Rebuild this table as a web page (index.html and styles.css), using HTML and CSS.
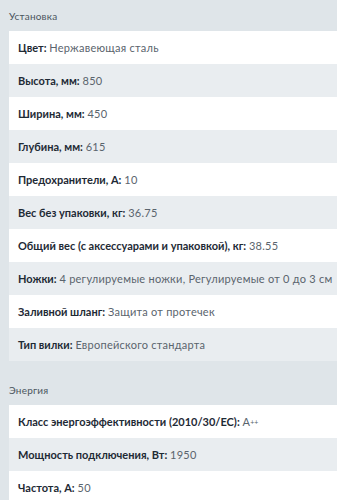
FILE: index.html
```html
<!DOCTYPE html>
<html lang="ru">
<head>
<meta charset="utf-8">
<link rel="stylesheet" href="styles.css">
</head>
<body>
<section class="group">
  <h3 class="group-title">Установка</h3>
  <ul class="specs">
    <li class="spec"><b>Цвет:</b> <span>Нержавеющая сталь</span></li>
    <li class="spec"><b>Высота, мм:</b> <span>850</span></li>
    <li class="spec"><b>Ширина, мм:</b> <span>450</span></li>
    <li class="spec"><b>Глубина, мм:</b> <span>615</span></li>
    <li class="spec"><b>Предохранители, А:</b> <span>10</span></li>
    <li class="spec"><b>Вес без упаковки, кг:</b> <span>36.75</span></li>
    <li class="spec"><b>Общий вес (с аксессуарами и упаковкой), кг:</b> <span>38.55</span></li>
    <li class="spec"><b>Ножки:</b> <span>4 регулируемые ножки, Регулируемые от 0 до 3 см</span></li>
    <li class="spec"><b>Заливной шланг:</b> <span>Защита от протечек</span></li>
    <li class="spec"><b>Тип вилки:</b> <span>Европейского стандарта</span></li>
  </ul>
</section>
<section class="group group-next">
  <h3 class="group-title">Энергия</h3>
  <ul class="specs">
    <li class="spec"><b>Класс энергоэффективности (2010/30/EC):</b> <span>A<small class="plus">++</small></span></li>
    <li class="spec"><b>Мощность подключения, Вт:</b> <span>1950</span></li>
    <li class="spec"><b>Частота, А:</b> <span>50</span></li>
  </ul>
</section>
</body>
</html>
```
FILE: styles.css
```css
html, body {
  margin: 0;
  padding: 0;
  background: #dfe5e9;
  font-family: "Lato", "Noto Sans", sans-serif;
  overflow: hidden;
}
body {
  padding-left: 9px;
}
.group-title {
  margin: 0;
  padding: 9px 0 8px;
  font-size: 10px;
  line-height: 14px;
  font-weight: 400;
  letter-spacing: 0.2px;
  color: #4b555e;
}
.group-next {
  margin-top: 13px;
}
.specs {
  list-style: none;
  margin: 0;
  padding: 0;
}
.spec {
  height: 33px;
  line-height: 33px;
  padding-left: 9px;
  font-size: 11px;
  color: #5a646d;
  white-space: nowrap;
  overflow: hidden;
  background: #fff;
}
.spec:nth-child(even) {
  background: #e9edf0;
}
.spec span {
  letter-spacing: 0.25px;
}
.spec b {
  color: #1e2a35;
  font-weight: 700;
}
.plus {
  font-size: 7px;
  vertical-align: 1px;
  letter-spacing: 0;
}
```
